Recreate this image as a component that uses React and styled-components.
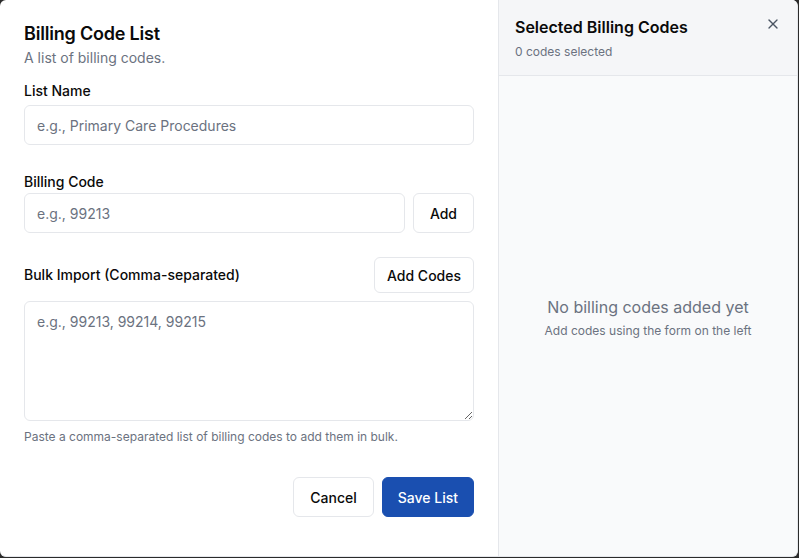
import React from "react";
import styled, { createGlobalStyle } from "styled-components";
import { X } from "lucide-react";

const GlobalStyle = createGlobalStyle`
  html, body, #root {
    margin: 0;
    height: 100%;
  }
  body {
    background: #2b2b2b;
    font-family: Inter, "Noto Sans", sans-serif;
    color: #0a0a0a;
  }
  * { box-sizing: border-box; }
`;

const Dialog = styled.div`
  display: grid;
  grid-template-columns: 499px 1fr;
  width: 798px;
  height: 557px;
  background: #fff;
  border: 1px solid #e5e7eb;
  border-top: none;
  border-left: none;
  border-radius: 6px;
  overflow: hidden;
`;

const FormPane = styled.section`
  display: flex;
  flex-direction: column;
  padding: 22px 24px 24px 24px;
  border-right: 1px solid #e5e7eb;
`;

const Title = styled.h2`
  margin: 0;
  font-size: 18px;
  font-weight: 600;
  line-height: 24px;
  letter-spacing: -0.2px;
`;

const Subtitle = styled.p`
  margin: 2px 0 0;
  font-size: 14px;
  line-height: 20px;
  color: #6b7280;
`;

const Field = styled.div`
  display: flex;
  flex-direction: column;
  margin-top: ${(p) => p.$top}px;
`;

const LabelRow = styled.div`
  display: flex;
  align-items: center;
  justify-content: space-between;
  margin-bottom: 8px;
`;

const Label = styled.label`
  font-size: 14px;
  font-weight: 500;
  line-height: 20px;
  margin-bottom: ${(p) => p.$gap || 0}px;
`;

const Row = styled.div`
  display: flex;
  gap: 8px;
`;

const Input = styled.input`
  flex: ${(p) => (p.$grow ? "1 1 auto" : "0 0 auto")};
  min-width: 0;
  height: 40px;
  padding: 0 12px;
  border: 1px solid #e5e7eb;
  border-radius: 6px;
  font: inherit;
  font-size: 14px;
  color: #111827;
  background: #fff;
  outline: none;
  &::placeholder { color: #6b7280; }
`;

const TextArea = styled.textarea`
  height: 120px;
  padding: 10px 12px;
  border: 1px solid #e5e7eb;
  border-radius: 6px;
  font: inherit;
  font-size: 14px;
  line-height: 20px;
  resize: vertical;
  outline: none;
  &::placeholder { color: #6b7280; }
`;

const Help = styled.p`
  margin: 8px 0 0;
  font-size: 12px;
  line-height: 16px;
  color: #6b7280;
`;

const Button = styled.button`
  flex: none;
  height: ${(p) => p.$h || 40}px;
  padding: 0 ${(p) => p.$px || 16}px;
  border-radius: 6px;
  font: inherit;
  font-size: 14px;
  font-weight: 500;
  cursor: pointer;
  border: 1px solid ${(p) => (p.$primary ? "#1a4fb0" : "#e5e7eb")};
  background: ${(p) => (p.$primary ? "#1a4fb0" : "#fff")};
  color: ${(p) => (p.$primary ? "#fff" : "#0a0a0a")};
`;

const Footer = styled.div`
  display: flex;
  justify-content: flex-end;
  gap: 8px;
  margin-top: 32px;
`;

const SidePane = styled.aside`
  display: flex;
  flex-direction: column;
  background: #f9fafb;
`;

const SideHeader = styled.header`
  position: relative;
  padding: 16px 16px 15px 16px;
  background: #f5f6f8;
  border-bottom: 1px solid #e5e7eb;
`;

const SideTitle = styled.h3`
  margin: 0;
  font-size: 16px;
  font-weight: 600;
  line-height: 22px;
`;

const SideCount = styled.p`
  margin: 6px 0 0;
  font-size: 12px;
  line-height: 16px;
  color: #6b7280;
`;

const Close = styled.button`
  position: absolute;
  top: 16px;
  right: 16px;
  display: flex;
  padding: 0;
  border: none;
  background: none;
  color: #4b5563;
  cursor: pointer;
`;

const Empty = styled.div`
  flex: 1;
  display: flex;
  flex-direction: column;
  align-items: center;
  justify-content: center;
  text-align: center;
  padding-top: 3px;
`;

const EmptyTitle = styled.p`
  margin: 0;
  font-size: 16px;
  line-height: 22px;
  color: #6b7280;
`;

const EmptyHint = styled.p`
  margin: 5px 0 0;
  font-size: 12px;
  line-height: 16px;
  color: #6b7280;
`;

export default function App() {
  return (
    <>
      <GlobalStyle />
      <Dialog>
        <FormPane>
          <Title>Billing Code List</Title>
          <Subtitle>A list of billing codes.</Subtitle>

          <Field $top={13}>
            <Label $gap={4}>List Name</Label>
            <Input placeholder="e.g., Primary Care Procedures" />
          </Field>

          <Field $top={27}>
            <Label $gap={1}>Billing Code</Label>
            <Row>
              <Input $grow placeholder="e.g., 99213" />
              <Button $px={16}>Add</Button>
            </Row>
          </Field>

          <Field $top={24}>
            <LabelRow>
              <Label>Bulk Import (Comma-separated)</Label>
              <Button $h={36} $px={12}>Add Codes</Button>
            </LabelRow>
            <TextArea placeholder="e.g., 99213, 99214, 99215" />
            <Help>Paste a comma-separated list of billing codes to add them in bulk.</Help>
          </Field>

          <Footer>
            <Button>Cancel</Button>
            <Button $primary $px={15}>Save List</Button>
          </Footer>
        </FormPane>

        <SidePane>
          <SideHeader>
            <SideTitle>Selected Billing Codes</SideTitle>
            <SideCount>0 codes selected</SideCount>
            <Close aria-label="Close">
              <X size={16} strokeWidth={2} />
            </Close>
          </SideHeader>
          <Empty>
            <EmptyTitle>No billing codes added yet</EmptyTitle>
            <EmptyHint>Add codes using the form on the left</EmptyHint>
          </Empty>
        </SidePane>
      </Dialog>
    </>
  );
}
